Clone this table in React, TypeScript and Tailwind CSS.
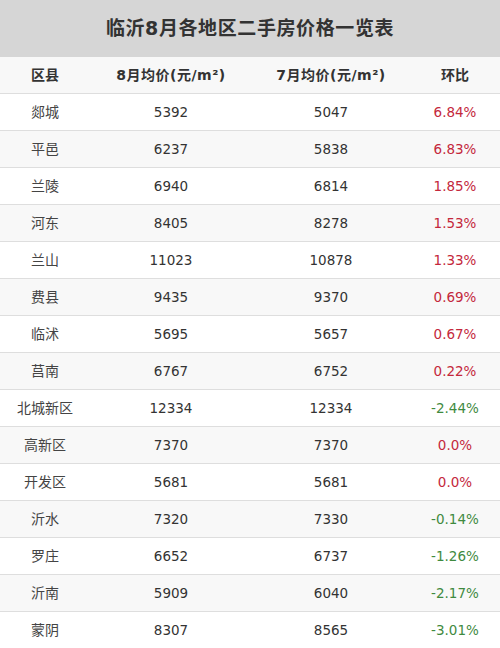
import React from "react";

type Row = { name: string; aug: string; jul: string; ratio: string };

const rows: Row[] = [
  { name: "郯城", aug: "5392", jul: "5047", ratio: "6.84%" },
  { name: "平邑", aug: "6237", jul: "5838", ratio: "6.83%" },
  { name: "兰陵", aug: "6940", jul: "6814", ratio: "1.85%" },
  { name: "河东", aug: "8405", jul: "8278", ratio: "1.53%" },
  { name: "兰山", aug: "11023", jul: "10878", ratio: "1.33%" },
  { name: "费县", aug: "9435", jul: "9370", ratio: "0.69%" },
  { name: "临沭", aug: "5695", jul: "5657", ratio: "0.67%" },
  { name: "莒南", aug: "6767", jul: "6752", ratio: "0.22%" },
  { name: "北城新区", aug: "12334", jul: "12334", ratio: "-2.44%" },
  { name: "高新区", aug: "7370", jul: "7370", ratio: "0.0%" },
  { name: "开发区", aug: "5681", jul: "5681", ratio: "0.0%" },
  { name: "沂水", aug: "7320", jul: "7330", ratio: "-0.14%" },
  { name: "罗庄", aug: "6652", jul: "6737", ratio: "-1.26%" },
  { name: "沂南", aug: "5909", jul: "6040", ratio: "-2.17%" },
  { name: "蒙阴", aug: "8307", jul: "8565", ratio: "-3.01%" },
];

const font = {
  fontFamily: '"DejaVu Sans", "Noto Sans CJK SC", sans-serif',
};

export default function App() {
  return (
    <div className="w-[500px] h-[648px] overflow-hidden bg-white text-[#333]" style={font}>
      <div className="h-[57px] bg-[#d6d6d6] flex items-center justify-center">
        <span className="text-[19px] font-bold tracking-[0.6px] text-[#333]">临沂8月各地区二手房价格一览表</span>
      </div>
      <div className="h-[37px] bg-[#f8f8f8] border-b border-[#dedede] flex items-center text-[14px] font-bold text-[#333]">
        <div className="w-[90px] text-center">区县</div>
        <div className="w-[162px] text-center tracking-[0.5px]">8月均价(元/m²)</div>
        <div className="w-[158px] text-center tracking-[0.5px]">7月均价(元/m²)</div>
        <div className="w-[90px] text-center">环比</div>
      </div>
      {rows.map((r, i) => {
        const neg = r.ratio.startsWith("-");
        return (
          <div
            key={r.name}
            className={
              "h-[37px] border-b border-[#dedede] flex items-center text-[13.5px] text-[#333] " +
              (i % 2 === 0 ? "bg-white" : "bg-[#f8f8f8]")
            }
          >
            <div className="w-[90px] text-center text-[14px] text-[#444]">{r.name}</div>
            <div className="w-[162px] text-center">{r.aug}</div>
            <div className="w-[158px] text-center">{r.jul}</div>
            <div className={"w-[90px] text-center " + (neg ? "text-[#3f8a3f]" : "text-[#c4283c]")}>
              {r.ratio}
            </div>
          </div>
        );
      })}
    </div>
  );
}
